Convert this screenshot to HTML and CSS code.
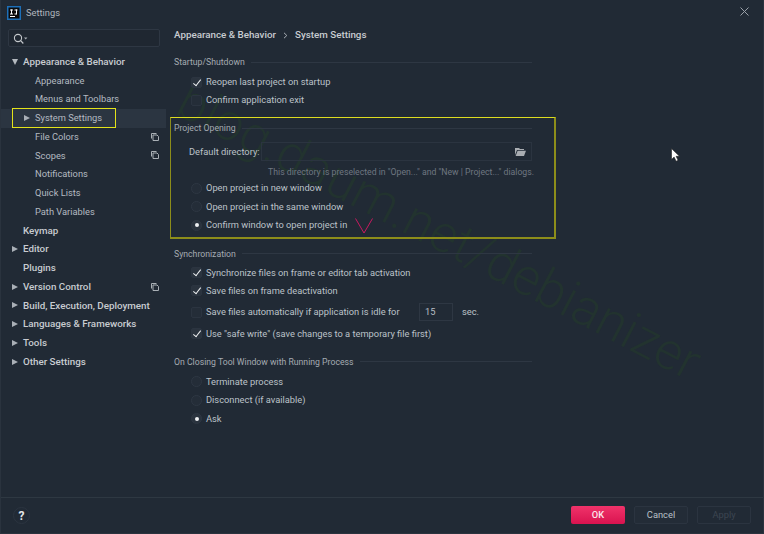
FILE: index.html
```html
<!DOCTYPE html>
<html lang="en">
<head>
<meta charset="utf-8">
<title>Settings</title>
<link rel="stylesheet" href="styles.css">
</head>
<body>
<div class="window">
  <header class="titlebar">
    <svg class="app-logo" width="14" height="14" viewBox="0 0 14 14"><rect width="14" height="14" fill="#1d6fb8"/><rect x="1.5" y="1.5" width="11" height="11" fill="#0b0b0b"/><rect x="3" y="3.5" width="3" height="1" fill="#fff"/><rect x="4" y="3.5" width="1" height="4.5" fill="#fff"/><rect x="3" y="7.5" width="3" height="1" fill="#fff"/><rect x="7.5" y="3.5" width="3" height="1" fill="#fff"/><rect x="9" y="3.5" width="1" height="5" fill="#fff"/><rect x="7.5" y="7.5" width="2" height="1" fill="#fff"/><rect x="3" y="10" width="5" height="1" fill="#fff"/></svg>
    <span class="title-text">Settings</span>
    <svg class="close" width="9" height="9" viewBox="0 0 9 9"><path d="M.5.5l8 8M8.5.5l-8 8" stroke="#9aa0a8" stroke-width="1" fill="none"/></svg>
  </header>
  <div class="body">
    <aside class="sidebar">
      <div class="search">
        <svg width="15" height="11" viewBox="0 0 15 11"><circle cx="5" cy="5" r="3.6" stroke="#c4c8cc" stroke-width="1.1" fill="none"/><path d="M7.7 7.7l2.6 2.8" stroke="#c4c8cc" stroke-width="1.2"/><path d="M11 4.6h3.4l-1.7 2z" fill="#aab0b6"/></svg>
      </div>
      <nav class="tree">
        <div class="row top"><i class="arrow down"></i>Appearance &amp; Behavior</div>
        <div class="row sub">Appearance</div>
        <div class="row sub">Menus and Toolbars</div>
        <div class="row sub selected"><i class="arrow"></i>System Settings</div>
        <div class="row sub">File Colors<svg class="copy" width="8" height="8" viewBox="0 0 8 8"><path d="M.5 5.5V.5h5M2 7.5V2h4l1.5 1.5v4z" fill="none" stroke="#aab0b6"/></svg></div>
        <div class="row sub">Scopes<svg class="copy" width="8" height="8" viewBox="0 0 8 8"><path d="M.5 5.5V.5h5M2 7.5V2h4l1.5 1.5v4z" fill="none" stroke="#aab0b6"/></svg></div>
        <div class="row sub">Notifications</div>
        <div class="row sub">Quick Lists</div>
        <div class="row sub">Path Variables</div>
        <div class="row top">Keymap</div>
        <div class="row top"><i class="arrow"></i>Editor</div>
        <div class="row top">Plugins</div>
        <div class="row top"><i class="arrow"></i>Version Control<svg class="copy" width="8" height="8" viewBox="0 0 8 8"><path d="M.5 5.5V.5h5M2 7.5V2h4l1.5 1.5v4z" fill="none" stroke="#aab0b6"/></svg></div>
        <div class="row top"><i class="arrow"></i>Build, Execution, Deployment</div>
        <div class="row top"><i class="arrow"></i>Languages &amp; Frameworks</div>
        <div class="row top"><i class="arrow"></i>Tools</div>
        <div class="row top"><i class="arrow"></i>Other Settings</div>
      </nav>
    </aside>
    <main class="content">
      <div class="crumbs"><span>Appearance &amp; Behavior</span><svg width="5" height="7" viewBox="0 0 5 7"><path d="M1 .8L3.8 3.5 1 6.2" fill="none" stroke="#aab0b6"/></svg><span>System Settings</span></div>

      <section class="group first">
        <h2 class="group-title"><span>Startup/Shutdown</span></h2>
        <div class="opt"><i class="check on"></i>Reopen last project on startup</div>
        <div class="opt"><i class="check"></i>Confirm application exit</div>
      </section>

      <section class="group opening">
        <h2 class="group-title"><span>Project Opening</span></h2>
        <div class="dir-row">
          <label>Default directory:</label>
          <div class="dir-input"><svg width="11" height="9" viewBox="0 0 11 9"><path d="M0 1h4l1 1h4v1H2L0 8z" fill="#a9adb2"/><path d="M2.6 3.8H11L9 9H.6z" fill="#a9adb2"/></svg></div>
        </div>
        <p class="hint">This directory is preselected in "Open..." and "New | Project..." dialogs.</p>
        <div class="opt radio-row"><i class="radio"></i>Open project in new window</div>
        <div class="opt radio-row"><i class="radio"></i>Open project in the same window</div>
        <div class="opt radio-row"><i class="radio on"></i>Confirm window to open project in</div>
      </section>

      <section class="group sync">
        <h2 class="group-title"><span>Synchronization</span></h2>
        <div class="opt"><i class="check on"></i>Synchronize files on frame or editor tab activation</div>
        <div class="opt"><i class="check on"></i>Save files on frame deactivation</div>
        <div class="opt idle"><i class="check"></i><span class="idle-label">Save files automatically if application is idle for</span><span class="num">15</span><span class="sec">sec.</span></div>
        <div class="opt safe"><i class="check on"></i>Use "safe write" (save changes to a temporary file first)</div>
      </section>

      <section class="group closing">
        <h2 class="group-title"><span>On Closing Tool Window with Running Process</span></h2>
        <div class="opt radio-row"><i class="radio"></i>Terminate process</div>
        <div class="opt radio-row"><i class="radio"></i>Disconnect (if available)</div>
        <div class="opt radio-row"><i class="radio on"></i>Ask</div>
      </section>
    </main>
  </div>
  <footer class="footer">
    <span class="help">?</span>
    <div class="buttons">
      <button class="btn ok">OK</button>
      <button class="btn cancel">Cancel</button>
      <button class="btn apply">Apply</button>
    </div>
  </footer>

  <div class="watermark">blog.daum.net/debianizer</div>
  <div class="mark mark-side"></div>
  <div class="mark mark-main"></div>
  <svg class="pink-check" width="18" height="16" viewBox="0 0 18 16"><path d="M.5.5L9 15 17.5.5" fill="none" stroke="#c81a60" stroke-width="1"/></svg>
  <svg class="cursor" width="10" height="14" viewBox="0 0 10 14"><path d="M.5.5v11l2.6-2.4 2 4.2 2-1-2-4h3.4z" fill="#fff" stroke="#222" stroke-width=".6"/></svg>
</div>
</body>
</html>
```

FILE: styles.css
```css
* { box-sizing: border-box; }
html, body { margin: 0; padding: 0; }
body { width: 764px; height: 534px; overflow: hidden; background: #212a35; }
.window {
  position: relative; width: 764px; height: 534px; overflow: hidden;
  display: flex; flex-direction: column;
  background: #212a35; color: #bcc2c9;
  font-family: Roboto, "Noto Sans", sans-serif; font-size: 9.3px; line-height: 12px;
  border: 1px solid #2a333e; border-width: 0 1px 1px 1px;
}
.titlebar { height: 24px; flex: none; display: flex; align-items: center; padding: 1px 14px 0 6px; }
.app-logo { margin-right: 5px; }
.title-text { font-size: 9.3px; color: #b0b6bd; }
.close { margin-left: auto; margin-top: -2px; }
.body { flex: 1; display: flex; min-height: 0; }

.sidebar { width: 165px; flex: none; padding-top: 5px; }
.search { height: 18px; margin: 0 6px 0 7px; border: 1px solid #2e3743; border-radius: 2px; background: #1f2731; display: flex; align-items: center; padding-left: 4px; }
.tree { margin-top: 5.6px; }
.row { position: relative; height: 18.75px; display: flex; align-items: center; color: #b4bac1; white-space: nowrap; }
.row.top { padding-left: 22px; font-size: 9.8px; font-weight: 500; color: #c8ccd1; }
.row.sub { padding-left: 34px; }
.row.selected { background: #2b3541; }
.arrow { position: absolute; left: 11px; top: 6px; width: 0; height: 0; border-left: 6px solid #a9afb6; border-top: 3.5px solid transparent; border-bottom: 3.5px solid transparent; }
.row.sub .arrow { left: 23px; }
.arrow.down { left: 11px; top: 6px; border-top: 6px solid #b4b9bf; border-left: 3.5px solid transparent; border-right: 3.5px solid transparent; border-bottom: 0; }
.copy { position: absolute; left: 150px; top: 5px; }

.content { flex: 1; padding-left: 8px; min-width: 0; }
.crumbs { height: 14px; margin-top: 4px; display: flex; align-items: center; gap: 7px; font-size: 9.8px; font-weight: 500; color: #c8ccd1; white-space: nowrap; }
.group { width: 358px; }
.group-title { margin: 0; height: 12px; display: flex; align-items: center; gap: 6px; font-size: 8.7px; font-weight: 400; color: #a5abb2; white-space: nowrap; }
.group-title::after { content: ""; flex: 1; height: 1px; background: #2e3743; }
.first { margin-top: 14px; }
.first .group-title { margin-bottom: 5px; }
.opt { height: 18px; display: flex; align-items: center; padding-left: 17px; white-space: nowrap; }
.check { width: 11px; height: 11px; margin-right: 4px; border-radius: 2px; border: 1px solid #2b3440; background: #242d38; position: relative; flex: none; }
.check.on { background: #2a333e; }
.check.on::after { content: ""; position: absolute; left: 3px; top: .2px; width: 3.4px; height: 7px; border: solid #eef0f2; border-width: 0 1.8px 1.8px 0; transform: rotate(38deg); }
.radio { width: 11px; height: 11px; margin-right: 4px; border-radius: 50%; border: 1px solid #2e3743; background: #242d38; position: relative; flex: none; }
.radio.on { background: #2a333e; }
.radio.on::after { content: ""; position: absolute; left: 2.5px; top: 2.5px; width: 4px; height: 4px; border-radius: 50%; background: #eef0f2; }

.opening { margin-top: 13px; }
.opening .group-title { margin-bottom: 8px; }
.dir-row { display: flex; align-items: center; height: 19px; padding-left: 15px; }
.dir-row label { width: 72px; flex: none; white-space: nowrap; }
.dir-input { flex: 1; height: 19px; border: 1px solid #2b3440; display: flex; align-items: center; justify-content: flex-end; padding-right: 5px; }
.hint { margin: 5px 0 1px; height: 12px; width: 360px; text-align: right; font-size: 8.7px; color: #6f7781; white-space: nowrap; }
.radio-row { height: 18.6px; }

.sync { margin-top: 13px; }
.sync .group-title { margin-bottom: 4px; }
.idle { height: 25px; }
.idle-label { width: 213px; flex: none; }
.num { width: 34px; height: 18px; border: 1px solid #2e3743; padding-left: 5px; display: flex; align-items: center; color: #b9bfc6; }
.sec { margin-left: 9px; }
.closing { margin-top: 13px; }
.closing .group-title { margin-bottom: 4.7px; }

.footer { height: 36px; flex: none; border-top: 1px solid #2e3842; display: flex; align-items: center; justify-content: space-between; padding: 0 12px 2px 12px; }
.help { width: 17px; height: 17px; margin-top: 2px; border-radius: 50%; border: 1px solid #2b3440; color: #e4e6e8; font-weight: 700; font-size: 12px; display: flex; align-items: center; justify-content: center; }
.buttons { display: flex; gap: 9px; }
.btn { width: 54px; height: 18px; padding: 0; border-radius: 2px; font: inherit; font-size: 9.3px; line-height: 16px; background: transparent; border: 1px solid #2b3440; color: #b9c0c8; }
.btn.ok { background: linear-gradient(#f0336a, #d9134f); border: 0; color: #fbe6ec; font-weight: 500; }
.btn.cancel { background: #232c37; }
.btn.apply { color: #3c4551; }

.watermark { position: absolute; left: 194px; top: 71px; font-family: Roboto, sans-serif; font-weight: 300; font-size: 52px; line-height: 60px; color: #22332f; white-space: nowrap; transform: rotate(27.5deg); transform-origin: 0 0; pointer-events: none; z-index: 0; }
.sidebar, .content, .titlebar, .footer { position: relative; z-index: 1; }
.mark { position: absolute; z-index: 2; pointer-events: none; }
.mark-side { left: 11px; top: 108px; width: 104px; height: 20px; border: 1px solid #e3e31a; }
.mark-main { left: 169px; top: 117px; width: 386px; height: 122px; border: 1px solid; border-width: 1.5px 2px 2px 1.5px; border-color: #dcdc20 #8d8d1a #8d8d1a #8d8d1a; }
.pink-check { position: absolute; left: 354px; top: 218px; z-index: 2; }
.cursor { position: absolute; left: 670px; top: 148px; z-index: 2; }
```
